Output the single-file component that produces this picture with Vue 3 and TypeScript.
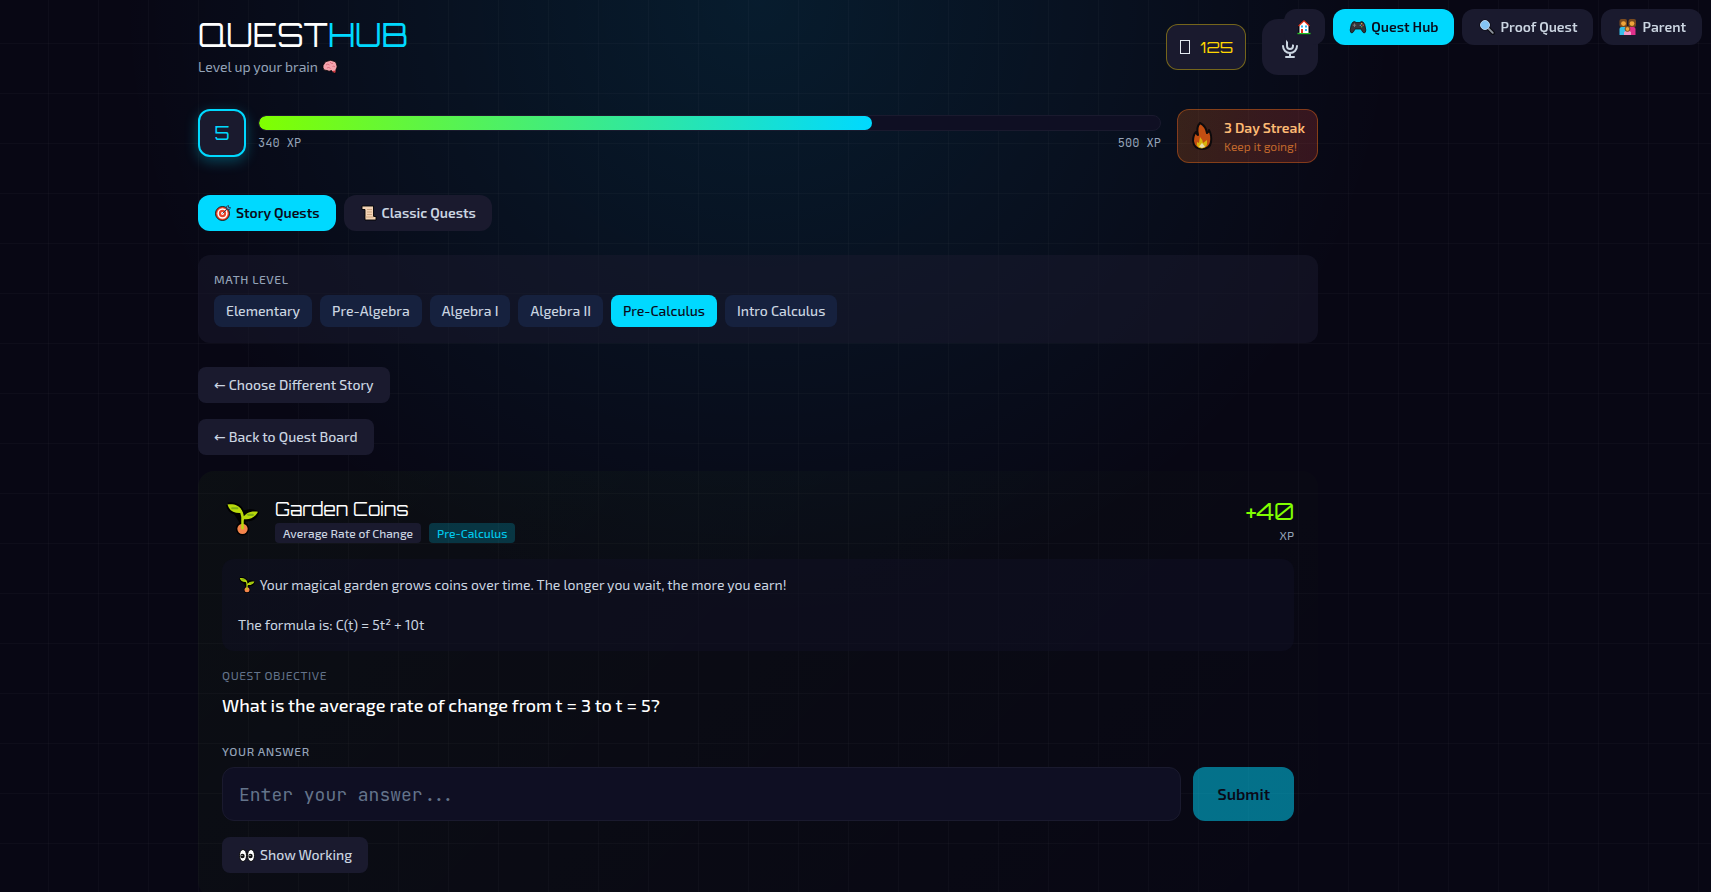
<script setup lang="ts">
import { ref } from 'vue'

interface NavItem { id: string; label: string; icon: string }

const nav: NavItem[] = [
  { id: 'home', label: '', icon: 'home' },
  { id: 'hub', label: 'Quest Hub', icon: 'gamepad' },
  { id: 'proof', label: 'Proof Quest', icon: 'lens' },
  { id: 'parent', label: 'Parent', icon: 'family' },
]
const levels: string[] = ['Elementary', 'Pre-Algebra', 'Algebra I', 'Algebra II', 'Pre-Calculus', 'Intro Calculus']

const page = ref('hub')
const tab = ref('story')
const level = ref('Pre-Calculus')
const answer = ref('')
const xp = 340
const xpGoal = 500
const story = ' Your magical garden grows coins over time. The longer you wait, the more you earn!\n\nThe formula is: C(t) = 5t² + 10t'
</script>

<template>
  <div class="shell">
    <svg class="sprite" aria-hidden="true">
      <symbol id="sprout" viewBox="0 0 32 32">
        <g stroke="#000" stroke-width="4" stroke-linejoin="round" fill="#000">
          <path d="M2 2C9 1 15 4 16 11C20 8 26 8 30 10C28 16 22 17 17 16V26M2 2C3 8 8 11 15 10" />
          <circle cx="16" cy="25.500" r="4.500" />
        </g>
        <circle cx="16" cy="25.500" r="5" fill="#f4844b" />
        <path d="M1.500 2C9 1 15 4 16 10C8 11 3 8 1.500 2ZM17 16C18 10 24 8 31 9C28 15 22 17 17 16Z" fill="#b8d80b" />
        <path d="M6 5.500H11M21 12H26" stroke="#7fae14" stroke-width="2" stroke-linecap="round" />
        <path d="M13 7Q16 10 16 14V26M21 13Q16 14 16 18" fill="none" stroke="#b8d80b" stroke-width="2.400" />
      </symbol>
    </svg>

    <nav class="topnav" aria-label="Sections">
      <button
        v-for="n in nav"
        :key="n.id"
        type="button"
        class="pill"
        :class="{ active: page === n.id, square: n.id === 'home' }"
        :aria-label="n.label || 'Home'"
        @click="page = n.id"
      >
        <svg v-if="n.icon === 'home'" class="emoji" viewBox="0 0 16 16">
          <path d="M2 15V6.500L8 .8L14 6.500V15Z" fill="#0b0b12" />
          <path d="M1.500 14.500H14.500" stroke="#23c423" stroke-width="1.400" />
          <path d="M3.500 14V6L8 1.800L12.500 6V14Z" fill="#fff" />
          <path d="M2.600 7L8 1.800L13.400 7" fill="none" stroke="#e8341c" stroke-width="1.200" />
          <path d="M5 6.500H7V8.500H5ZM9 6.500H11V8.500H9ZM9 10H11V12H9Z" fill="#2cb4f0" />
          <path d="M5 10H7V14H5Z" fill="#e8341c" />
        </svg>
        <svg v-else-if="n.icon === 'gamepad'" class="emoji" viewBox="0 0 16 16">
          <path d="M3 3Q5 2 6 3.500H10Q11 2 13 3Q15 4 15.800 11Q15.800 14 14 14Q12.500 13.500 11 10H5Q3.500 13.500 2 14Q.2 14 .2 11Q1 4 3 3Z" fill="#333338" stroke="#111" stroke-width=".8" />
          <path d="M4.500 4.500V8M2.800 6.200H6.200" stroke="#777" />
          <circle cx="10.300" cy="6.200" r=".7" fill="#5aa0e8" /><circle cx="13.200" cy="6.200" r=".7" fill="#e84a3c" />
          <circle cx="11.700" cy="4.800" r=".7" fill="#e8c43c" /><circle cx="11.700" cy="7.700" r=".7" fill="#5cb85c" />
        </svg>
        <svg v-else-if="n.icon === 'lens'" class="emoji" viewBox="0 0 16 16">
          <circle cx="6" cy="6" r="5.600" fill="#0b0b12" />
          <path d="M9.500 9.500L14 14" stroke="#0b0b12" stroke-width="4" stroke-linecap="round" />
          <path d="M9.500 9.500L13.800 13.800" stroke="#8d939c" stroke-width="1.800" stroke-linecap="round" />
          <circle cx="6" cy="6" r="4.500" fill="#84c5f4" stroke="#b9d4ea" />
        </svg>
        <svg v-else class="emoji wide" viewBox="0 0 18 16">
          <rect x="1" y="0" width="7.500" height="8" rx="2" fill="#7a4a1e" />
          <rect x="10" y="0" width="7.500" height="8" rx="2" fill="#7a4a1e" />
          <circle cx="5" cy="4.600" r="2.400" fill="#f0a63c" /><circle cx="13.500" cy="4.600" r="2.400" fill="#f0a63c" />
          <path d="M1 16V10Q1 8 3 8H7.500V16Z" fill="#35c0ea" />
          <path d="M17 16V10Q17 8 15 8H10.500V16Z" fill="#e0308c" />
          <path d="M5.500 16V13Q9 10.500 12.500 13V16Z" fill="#f49ac8" />
          <circle cx="9" cy="10" r="2.400" fill="#f0a63c" stroke="#7a4a1e" />
        </svg>
        <span v-if="n.label">{{ n.label }}</span>
      </button>
    </nav>

    <main class="column">
      <header class="header">
        <div>
          <h1 class="logo">QUEST<span>HUB</span></h1>
          <p class="tagline">
            Level up your brain
            <svg class="emoji" viewBox="0 0 16 16">
              <path d="M2 5Q3 2 6 2Q9 .6 11 2Q14 2 14.500 5Q16 8 14 10.500L13.500 14L11 13.500L9.500 11.500Q7 13 5 11.500Q1 12 1 8.500Q.5 6.500 2 5Z" fill="#f5a3ad" stroke="#000" stroke-width=".8" />
              <path d="M4 6Q6 4 7.500 6M8 3Q9 5 11 4.500M5 9Q7 7.500 8.500 9.500M10.500 7.500Q12 6.500 13 8" fill="none" stroke="#d96a7c" stroke-width=".9" />
              <path d="M10.500 12L13.500 11.500L13.200 13.800L11.300 13.300Z" fill="#d02f3a" />
            </svg>
          </p>
        </div>
        <div class="header-side">
          <div class="coins">
            <span class="coin-box" aria-hidden="true"></span>
            <span class="coin-count">125</span>
          </div>
          <button type="button" class="mic" aria-label="Voice input">
            <svg viewBox="0 0 24 24">
              <path d="M19 11a7 7 0 01-7 7m0 0a7 7 0 01-7-7m7 7v4m0 0H8m4 0h4m-4-8a3 3 0 01-3-3V5a3 3 0 116 0v6a3 3 0 01-3 3z" fill="none" stroke="#cbd5e1" stroke-width="2" stroke-linecap="round" stroke-linejoin="round" />
            </svg>
          </button>
        </div>
      </header>

      <section class="stats">
        <div class="level">5</div>
        <div class="xp">
          <div class="track" role="progressbar" aria-label="XP" :aria-valuenow="xp" :aria-valuemax="xpGoal">
            <div class="fill" :style="{ width: (xp / xpGoal) * 100 + '%' }"></div>
          </div>
          <div class="xp-labels"><span>{{ xp }} XP</span><span>{{ xpGoal }} XP</span></div>
        </div>
        <div class="streak">
          <svg class="flame" viewBox="0 0 24 32">
            <path d="M10 3Q16 6 17 13Q19 12 19 10Q22 15 21 22Q20 29 12 29Q4 29 3 21Q3 15 6 12Q7 15 8 15Q6 7 10 3Z" fill="#c24e12" stroke="#0d0a0c" stroke-width="2" stroke-linejoin="round" />
            <path d="M10 17Q13 20 13 23L17 20Q18 28 12 28.500Q6 28 7 22L9 23Z" fill="#d8b30d" />
            <path d="M12 23L15 26.500L12 28L9 26.500Z" fill="#e8dcae" />
          </svg>
          <div>
            <p class="streak-title">3 Day Streak</p>
            <p class="streak-note">Keep it going!</p>
          </div>
        </div>
      </section>

      <div class="tabs">
        <button type="button" class="pill" :class="{ active: tab === 'story' }" @click="tab = 'story'">
          <svg class="emoji" viewBox="0 0 16 16">
            <circle cx="7.500" cy="8.500" r="7" fill="#e8452c" stroke="#111" stroke-width=".9" />
            <circle cx="7.500" cy="8.500" r="4.400" fill="none" stroke="#fff" stroke-width="1.500" />
            <circle cx="7.500" cy="8.500" r="1.400" fill="#fff" />
            <path d="M7.500 8.500L12 4L11.500 1.500L13.500 .5V2.500H15.500L14.500 4.500L12 4" fill="#5cc0f0" stroke="#1b3a5c" stroke-width=".9" />
          </svg>
          <span>Story Quests</span>
        </button>
        <button type="button" class="pill" :class="{ active: tab === 'classic' }" @click="tab = 'classic'">
          <svg class="emoji" viewBox="0 0 16 16">
            <path d="M1 1H12.500V11.500H15V15H4V4.500H1Z" fill="#f3d3b5" stroke="#000" stroke-width=".9" />
            <path d="M6 4.500H11M6 7H11M6 9.500H11M4.500 12H12.500" stroke="#c79f7c" stroke-width=".9" />
          </svg>
          <span>Classic Quests</span>
        </button>
      </div>

      <section class="panel">
        <h2 class="eyebrow strong">MATH LEVEL</h2>
        <div class="chips">
          <button v-for="l in levels" :key="l" type="button" class="chip" :class="{ active: level === l }" @click="level = l">{{ l }}</button>
        </div>
      </section>

      <div class="backs">
        <button type="button" class="plain">← Choose Different Story</button>
        <button type="button" class="plain">← Back to Quest Board</button>
      </div>

      <article class="card">
        <div class="card-head">
          <svg class="card-icon"><use href="#sprout" /></svg>
          <div class="card-title">
            <h2>Garden Coins</h2>
            <div class="tags"><span class="tag">Average Rate of Change</span><span class="tag cyan">Pre-Calculus</span></div>
          </div>
          <div class="reward"><strong>+40</strong><span>XP</span></div>
        </div>
        <p class="story"><svg class="emoji"><use href="#sprout" /></svg>{{ story }}</p>
        <h3 class="eyebrow dim">QUEST OBJECTIVE</h3>
        <p class="question">What is the average rate of change from t = 3 to t = 5?</p>
        <form @submit.prevent>
          <label class="eyebrow strong" for="answer">YOUR ANSWER</label>
          <div class="answer-row">
            <input id="answer" v-model="answer" type="text" placeholder="Enter your answer..." />
            <button type="submit" class="submit" :disabled="!answer">Submit</button>
          </div>
        </form>
        <button type="button" class="plain">
          <svg class="emoji" viewBox="0 0 16 16">
            <ellipse cx="4" cy="8.500" rx="3.500" ry="6" fill="#fff" stroke="#000" stroke-width=".9" />
            <ellipse cx="12" cy="8.500" rx="3.500" ry="6" fill="#fff" stroke="#000" stroke-width=".9" />
            <circle cx="3.500" cy="9" r="2.200" fill="#111" /><circle cx="11.500" cy="9" r="2.200" fill="#111" />
            <circle cx="3" cy="8.500" r=".6" fill="#fff" /><circle cx="11" cy="8.500" r=".6" fill="#fff" />
          </svg>
          Show Working
        </button>
      </article>
    </main>
  </div>
</template>

<style>
body {
  margin: 0;
  background: #080714;
}
</style>

<style scoped>
.shell {
  box-sizing: border-box;
  height: 100vh;
  overflow-y: auto;
  scrollbar-width: none;
  padding: 17px 211px 0 16px;
  font-family: "Exo 2", "DejaVu Sans", sans-serif;
  font-size: 14px;
  line-height: 20px;
  color: #cbd5e1;
  background:
    linear-gradient(rgba(255, 255, 255, 0.022) 1px, transparent 1px) 0 43px / 50px 50px,
    linear-gradient(90deg, rgba(255, 255, 255, 0.022) 1px, transparent 1px) 48px 0 / 50px 50px,
    radial-gradient(ellipse 640px 620px at 758px 0, rgba(0, 200, 255, 0.11), transparent),
    #080714;
}
h1, h2, h3, p { margin: 0; font-weight: 400; }
button, input { font: inherit; color: inherit; border: 0; margin: 0; }
button { cursor: pointer; }
.sprite { position: absolute; width: 0; height: 0; }
.emoji { width: 18px; height: 16px; margin-right: 1px; vertical-align: -3px; flex: none; }
.emoji.wide { width: 21px; }
.column { max-width: 1120px; margin: 0 auto; }

.topnav { position: fixed; top: 9px; right: 9px; display: flex; gap: 8px; }
.pill {
  display: flex; align-items: center; gap: 3px; height: 36px; padding: 0 16px;
  border-radius: 12px; background: #1a1a2e; font-weight: 600; white-space: nowrap;
}
.pill.square { padding: 0 11px; }
.active { background: #00d9ff; color: #0a0a1a; }

.header { display: flex; justify-content: space-between; align-items: center; }
.logo { font: 32px/36px Orbitron, "DejaVu Sans", sans-serif; color: #fff; }
.logo span { color: #00d9ff; }
.tagline { margin-top: 4px; color: #94a3b8; }
.header-side { display: flex; align-items: center; gap: 16px; }
.coins {
  display: flex; align-items: center; gap: 10px; box-sizing: border-box; height: 46px; padding: 0 12px 0 13px;
  border: 1px solid rgba(255, 215, 0, 0.4); border-radius: 12px; background: #1a1a2e;
}
.coin-box { width: 8px; height: 12px; border: 1px solid #e2e8f0; }
.coin-count { font: 16px/28px Orbitron, "DejaVu Sans", sans-serif; color: #ffd700; }
.mic { display: grid; place-items: center; width: 56px; height: 56px; padding: 0; border-radius: 16px; background: #1a1a2e; }
.mic svg { width: 24px; height: 24px; }

.stats { display: flex; align-items: flex-start; margin-top: 32px; }
.level {
  box-sizing: border-box; width: 48px; height: 48px; border: 2px solid #00d9ff; border-radius: 12px; background: #1a1a2e;
  font: 18px/44px Orbitron, "DejaVu Sans", sans-serif; text-align: center; color: #00d9ff;
  box-shadow: 0 4px 14px rgba(0, 217, 255, 0.3);
}
.xp { flex: 1; margin: 6px 16px 0 12px; }
.track { height: 14px; border: 1px solid #1a1a2e; border-radius: 8px; background: #0f0f23; overflow: hidden; }
.fill { height: 100%; border-radius: 8px; background: linear-gradient(90deg, #80ff00, #00d9ff); }
.xp-labels { display: flex; justify-content: space-between; margin-top: 4px; font: 12px/16px "JetBrains Mono", "DejaVu Sans Mono", monospace; color: #94a3b8; }
.streak {
  display: flex; align-items: center; gap: 10px; box-sizing: border-box; height: 54px; padding: 0 12px;
  border: 1px solid rgba(249, 115, 22, 0.4); border-radius: 12px;
  background: linear-gradient(90deg, rgba(249, 115, 22, 0.2), rgba(239, 68, 68, 0.2));
}
.flame { width: 24px; height: 32px; }
.streak-title { font-weight: 600; color: #fdba74; }
.streak-note { font-size: 12px; line-height: 16px; color: #c2682c; }

.tabs { display: flex; gap: 8px; margin-top: 32px; }
.panel { margin-top: 24px; padding: 16px; border-radius: 12px; background: rgba(26, 26, 46, 0.5); }
.eyebrow { display: block; font-size: 12px; line-height: 16px; letter-spacing: 0.05em; }
.strong { font-weight: 500; color: #94a3b8; }
.dim { margin-top: 16px; color: #64748b; }
.chips { display: flex; flex-wrap: wrap; gap: 8px; margin-top: 8px; }
.chip { height: 32px; padding: 0 12px; border-radius: 8px; background: #16213e; font-weight: 500; }
.chip.active { background: #00d9ff; }
.backs { display: flex; flex-direction: column; align-items: flex-start; gap: 16px; margin: 24px 0 16px; }
.plain { height: 36px; padding: 0 16px; border-radius: 8px; background: #1a1a2e; font-weight: 500; }

.card {
  padding: 24px; border-radius: 16px;
  background: linear-gradient(135deg, rgba(128, 255, 0, 0.03), transparent);
}
.card-head { display: flex; gap: 16px; }
.card-icon { width: 33px; height: 36px; margin: 6px 0 0 4px; }
.card-title { flex: 1; }
.card-title h2 { font: 18px/28px Orbitron, "DejaVu Sans", sans-serif; color: #fff; }
.tags { display: flex; gap: 8px; }
.tag { padding: 2px 8px; border-radius: 4px; background: #1a1a2e; font-size: 12px; line-height: 16px; font-weight: 500; }
.tag.cyan { background: rgba(0, 217, 255, 0.2); color: #00c8ec; }
.reward { text-align: right; }
.reward strong { display: block; font: 24px/32px Orbitron, "DejaVu Sans", sans-serif; color: #80ff00; }
.reward span { display: block; font-size: 12px; line-height: 16px; color: #94a3b8; }
.story { margin-top: 16px; padding: 16px; border-radius: 12px; background: rgba(15, 15, 35, 0.5); white-space: pre-line; }
.question { margin: 8px 0 24px; font-size: 18px; line-height: 28px; font-weight: 500; color: #fff; }
.answer-row { display: flex; gap: 12px; margin: 8px 0 16px; }
input {
  flex: 1; min-width: 0; box-sizing: border-box; height: 54px; padding: 0 16px; border: 1px solid #1a1a2e; border-radius: 12px;
  background: #0f0f23; font: 18px/28px "JetBrains Mono", "DejaVu Sans Mono", monospace;
}
input::placeholder { color: #64748b; opacity: 1; }
.submit { padding: 0 24px; border-radius: 12px; background: #00d9ff; color: #0a0a1a; font-size: 16px; font-weight: 600; }
.submit:disabled { opacity: 0.5; }
</style>
